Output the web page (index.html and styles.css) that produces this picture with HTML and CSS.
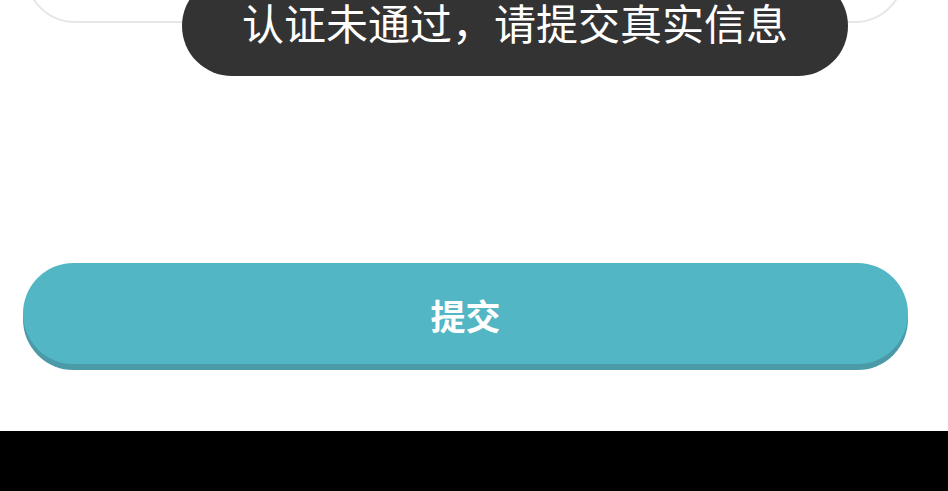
FILE: index.html
```html
<!DOCTYPE html>
<html lang="zh">
<head>
<meta charset="utf-8">
<link rel="stylesheet" href="styles.css">
</head>
<body>
<div class="page">
  <main class="content">
    <div class="field"></div>
    <button class="submit">提交</button>
  </main>
  <div class="navbar"></div>
  <div class="toast">认证未通过，请提交真实信息</div>
</div>
</body>
</html>
```
FILE: styles.css
```css
html, body {
  margin: 0;
  padding: 0;
  background: #fff;
  font-family: "Noto Sans CJK SC", "Noto Sans", sans-serif;
}
.page {
  position: relative;
  width: 948px;
  height: 491px;
  overflow: hidden;
  display: flex;
  flex-direction: column;
}
.content {
  height: 431px;
  display: flex;
  flex-direction: column;
  background: #fff;
}
.field {
  margin: -77px 0 0 25px;
  width: 880px;
  height: 100px;
  box-sizing: border-box;
  border: 2px solid #e6e6e6;
  border-radius: 50px;
  background: #fff;
}
.submit {
  margin: 240px 0 0 23px;
  width: 885px;
  height: 101px;
  border: none;
  border-radius: 51px;
  background: #53b6c4;
  box-shadow: 0 6px 0 #4a9ba7;
  color: #fff;
  font-family: "Noto Sans CJK SC", sans-serif;
  font-size: 35px;
  font-weight: 700;
  padding: 2px 0 0;
}
.navbar {
  flex: 1;
  background: #000;
}
.toast {
  position: absolute;
  top: -24px;
  left: 182px;
  width: 666px;
  height: 100px;
  box-sizing: border-box;
  padding-bottom: 8px;
  border-radius: 50px;
  background: #333333;
  color: #fff;
  font-size: 42px;
  display: flex;
  align-items: center;
  justify-content: center;
  line-height: 1;
}
```
